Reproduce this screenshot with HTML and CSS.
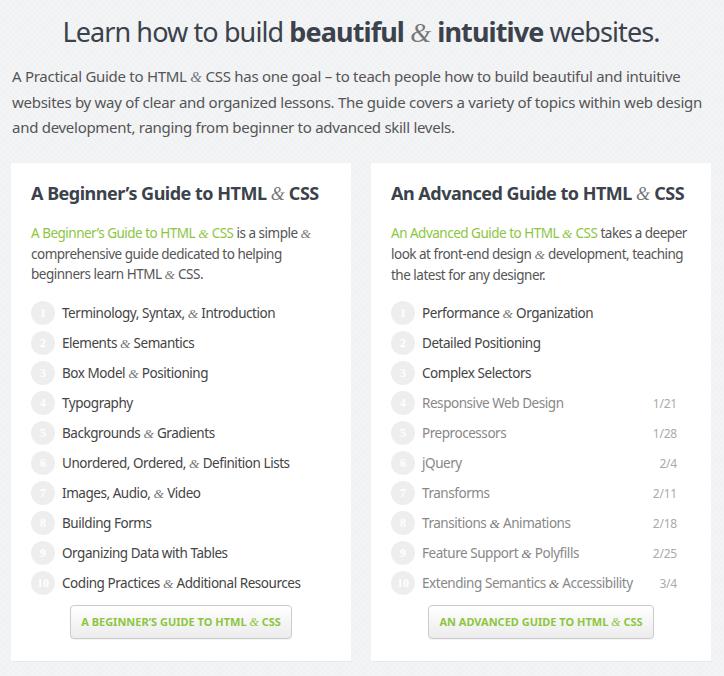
FILE: index.html
```html
<!DOCTYPE html>
<html>
<head>
    <meta charset="utf-8">
    <title>A Practical Guide to HTML &amp; CSS</title>
    <link rel="stylesheet" href="styles.css">
</head>
<body>
	<h1 class="intro-title">Learn how to build <b>beautiful</b> <span class="amp">&amp;</span> <b>intuitive</b> websites.</h1>
	<p class="intro-text">A Practical Guide to HTML <span class="amp">&amp;</span> CSS has one goal – to teach people how to build beautiful and intuitive websites by way of clear and organized lessons. The guide covers a variety of topics within web design and development, ranging from beginner to advanced skill levels.</p>

	<div class="guides">
		<section class="guide">
			<h2>A Beginner’s Guide to HTML <span class="amp">&amp;</span> CSS</h2>
			<p class="guide-desc"><a href="#">A Beginner’s Guide to HTML <span class="amp">&amp;</span> CSS</a> is a simple <span class="amp">&amp;</span> comprehensive guide dedicated to helping beginners learn HTML <span class="amp">&amp;</span> CSS.</p>
			<ol class="lessons">
				<li><span class="num">1</span><span class="title">Terminology, Syntax, <span class="amp">&amp;</span> Introduction</span></li>
				<li><span class="num">2</span><span class="title">Elements <span class="amp">&amp;</span> Semantics</span></li>
				<li><span class="num">3</span><span class="title">Box Model <span class="amp">&amp;</span> Positioning</span></li>
				<li><span class="num">4</span><span class="title">Typography</span></li>
				<li><span class="num">5</span><span class="title">Backgrounds <span class="amp">&amp;</span> Gradients</span></li>
				<li><span class="num">6</span><span class="title">Unordered, Ordered, <span class="amp">&amp;</span> Definition Lists</span></li>
				<li><span class="num">7</span><span class="title">Images, Audio, <span class="amp">&amp;</span> Video</span></li>
				<li><span class="num">8</span><span class="title">Building Forms</span></li>
				<li><span class="num">9</span><span class="title">Organizing Data with Tables</span></li>
				<li><span class="num">10</span><span class="title">Coding Practices <span class="amp">&amp;</span> Additional Resources</span></li>
			</ol>
			<div class="btn-row"><a class="btn" href="#">A Beginner’s Guide to HTML <span class="amp">&amp;</span> CSS</a></div>
		</section>

		<section class="guide">
			<h2>An Advanced Guide to HTML <span class="amp">&amp;</span> CSS</h2>
			<p class="guide-desc"><a href="#">An Advanced Guide to HTML <span class="amp">&amp;</span> CSS</a> takes a deeper look at front-end design <span class="amp">&amp;</span> development, teaching the latest for any designer.</p>
			<ol class="lessons">
				<li><span class="num">1</span><span class="title">Performance <span class="amp">&amp;</span> Organization</span></li>
				<li><span class="num">2</span><span class="title">Detailed Positioning</span></li>
				<li><span class="num">3</span><span class="title">Complex Selectors</span></li>
				<li class="soon"><span class="num">4</span><span class="title">Responsive Web Design</span><span class="date">1/21</span></li>
				<li class="soon"><span class="num">5</span><span class="title">Preprocessors</span><span class="date">1/28</span></li>
				<li class="soon"><span class="num">6</span><span class="title">jQuery</span><span class="date">2/4</span></li>
				<li class="soon"><span class="num">7</span><span class="title">Transforms</span><span class="date">2/11</span></li>
				<li class="soon"><span class="num">8</span><span class="title">Transitions <span class="amp">&amp;</span> Animations</span><span class="date">2/18</span></li>
				<li class="soon"><span class="num">9</span><span class="title">Feature Support <span class="amp">&amp;</span> Polyfills</span><span class="date">2/25</span></li>
				<li class="soon"><span class="num">10</span><span class="title">Extending Semantics <span class="amp">&amp;</span> Accessibility</span><span class="date">3/4</span></li>
			</ol>
			<div class="btn-row"><a class="btn" href="#">An Advanced Guide to HTML <span class="amp">&amp;</span> CSS</a></div>
		</section>
	</div>
</body>
</html>
```

FILE: styles.css
```css
body,html{padding:0;margin:0;}
body{
	background:#f3f4f6;
	background-image:linear-gradient(45deg,#f0f1f3 25%,transparent 25%,transparent 75%,#f0f1f3 75%),linear-gradient(45deg,#f0f1f3 25%,transparent 25%,transparent 75%,#f0f1f3 75%);
	background-size:6px 6px;
	background-position:0 0,3px 3px;
	font-family:"Noto Sans","Open Sans",sans-serif;
	color:#555;
	padding:0 13px 0 11px;
}
.amp{font-family:"Liberation Serif","DejaVu Serif",serif;font-style:italic;font-weight:normal;color:#777;letter-spacing:0;}
a{text-decoration:none;}

.intro-title{
	font-size:27px;font-weight:normal;color:#3b424b;text-align:center;
	margin:0;padding-top:14px;line-height:36px;letter-spacing:-0.9px;
}
.intro-title b{font-weight:bold;}
.intro-text{
	font-size:15px;line-height:25px;margin:13px 0 0 1px;color:#555;letter-spacing:-0.28px;
}

.guides{display:flex;gap:20px;margin-top:23px;}
.guide{
	flex:1;background:#fff;border-bottom:1px solid #e8e9eb;
	padding:16px 16px 22px 20px;
}
.guide h2{font-size:18px;font-weight:bold;color:#3b424b;margin:0;line-height:28px;letter-spacing:-0.5px;}
.guide-desc{font-size:13.5px;line-height:20px;margin:15px 0 13px;color:#555;letter-spacing:-0.5px;}
.guide-desc a{color:#8cc63f;}
.guide-desc a .amp{color:#8cc63f;}

.lessons{list-style:none;margin:0;padding:0;}
.lessons li{display:flex;align-items:center;height:30px;font-size:13.5px;color:#444;letter-spacing:-0.45px;}
.lessons .num{
	width:24px;height:24px;border-radius:50%;background:#eee;color:#fff;
	font-family:"Liberation Serif",serif;font-weight:bold;font-size:12px;letter-spacing:0;
	display:flex;align-items:center;justify-content:center;margin-right:7px;flex:none;
}
.lessons .title{flex:1;}
.lessons .soon{color:#888;}
.lessons .date{font-size:12px;color:#aaa;margin-right:18px;letter-spacing:-0.2px;}

.btn-row{text-align:center;margin-top:7px;padding-right:4px;}
.btn{
	display:inline-block;padding:0 10px;height:32px;line-height:32px;
	border:1px solid #ccc;border-radius:4px;
	background:linear-gradient(#fff,#ececec);
	color:#8cc63f;font-size:11px;font-weight:bold;text-transform:uppercase;
	box-shadow:0 1px 1px rgba(0,0,0,.05);
}
.btn .amp{color:#8cc63f;font-size:12px;}
```
